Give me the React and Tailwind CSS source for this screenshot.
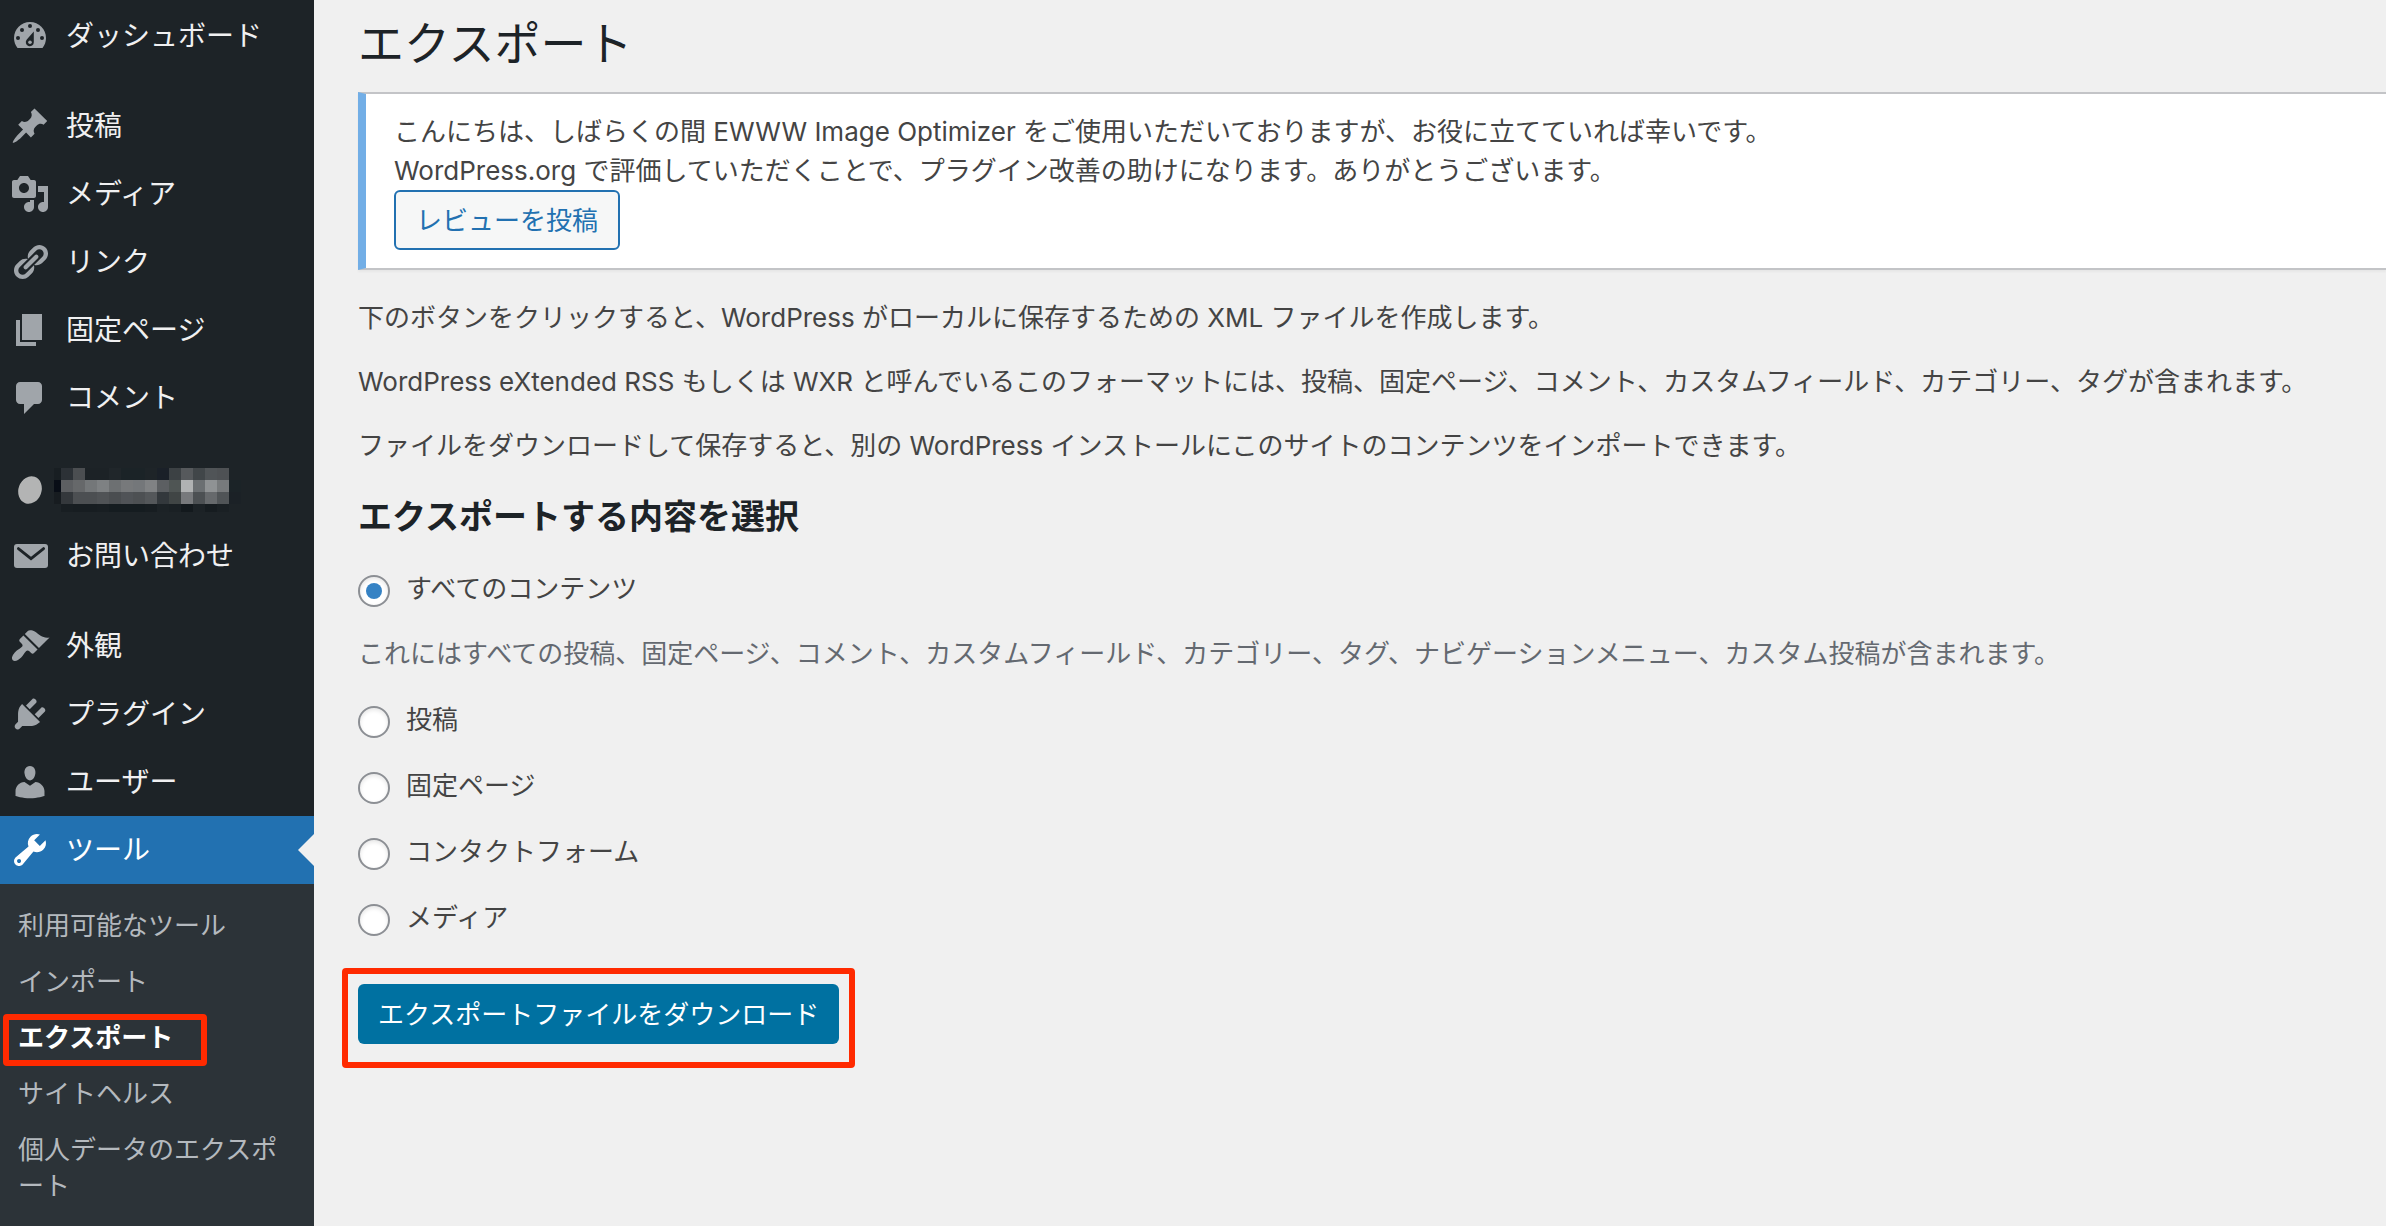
import React, { useState } from 'react';

const ICONS = {
  post: 'M10.44 3.02l1.82-1.82 6.36 6.35-1.83 1.82c-1.05-.68-2.48-.57-3.41.36l-.75.75c-.92.93-1.04 2.35-.35 3.41l-1.83 1.82-2.41-2.41-2.8 2.79c-.42.42-3.38 2.71-3.8 2.29s1.86-3.39 2.28-3.81l2.79-2.79L4.1 9.36l1.83-1.82c1.05.69 2.48.57 3.4-.36l.75-.75c.93-.92 1.05-2.35.36-3.41z',
  media: 'M13 11V4c0-.55-.45-1-1-1h-1.67L9 1H5L3.67 3H2c-.55 0-1 .45-1 1v7c0 .55.45 1 1 1h10c.55 0 1-.45 1-1zM7 4.5c1.38 0 2.5 1.12 2.5 2.5S8.38 9.5 7 9.5 4.5 8.38 4.5 7 5.62 4.5 7 4.5zM14 6h5v10.5c0 1.38-1.12 2.5-2.5 2.5S14 17.88 14 16.5s1.12-2.5 2.5-2.5c.17 0 .34.02.5.05V9h-3V6zm-4 8.05V13h2v3.5c0 1.38-1.12 2.5-2.5 2.5S7 17.88 7 16.5 8.12 14 9.5 14c.17 0 .34.02.5.05z',
  link: 'M17.74 2.76c1.68 1.69 1.68 4.41 0 6.1l-1.53 1.52c-1.12 1.12-2.7 1.47-4.14 1.09l2.62-2.61.76-.77.76-.76c.84-.84.84-2.2 0-3.04-.84-.85-2.2-.85-3.04 0l-.77.76-3.38 3.38c-.37-1.44-.02-3.02 1.1-4.14l1.52-1.53c1.69-1.68 4.42-1.68 6.1 0zM8.59 13.43l5.34-5.34c.42-.42.42-1.1 0-1.52-.44-.43-1.13-.39-1.53 0l-5.33 5.34c-.42.42-.42 1.1 0 1.52.44.43 1.13.39 1.52 0zm-.76 2.29l4.14-4.15c.38 1.44.03 3.02-1.09 4.14l-1.52 1.53c-1.69 1.68-4.41 1.68-6.1 0-1.68-1.68-1.68-4.42 0-6.1l1.53-1.52c1.12-1.12 2.7-1.47 4.14-1.1l-4.14 4.15c-.85.84-.85 2.2 0 3.05.84.84 2.2.84 3.04 0z',
  page: 'M6 15V2h10v13H6zm-1 1h8v2H3V5h2v11z',
  comment: 'M5 2h9c1.1 0 2 .9 2 2v7c0 1.1-.9 2-2 2h-2l-5 5v-5H5c-1.1 0-2-.9-2-2V4c0-1.1.9-2 2-2z',
  appearance: 'M14.48 11.06L7.41 3.99l1.5-1.5c.5-.56 2.3-.47 3.51.32 1.21.8 1.43 1.28 2.91 2.1 1.18.64 2.45 1.26 4.45.85zm-.71.71L6.7 4.7 4.93 6.47c-.39.39-.39 1.02 0 1.41l1.06 1.06c.39.39.39 1.03 0 1.42-.6.6-1.43 1.11-2.21 1.69-.35.26-.7.53-1.01.84C1.43 14.23.4 16.08 1.4 17.07c.99 1 2.84-.03 4.18-1.36.31-.31.58-.66.85-1.02.57-.78 1.08-1.61 1.69-2.21.39-.39 1.02-.39 1.41 0l1.06 1.06c.39.39 1.02.39 1.41 0z',
  plugin: 'M13.11 4.36L9.87 7.6 8 5.73l3.24-3.24c.35-.34 1.05-.2 1.56.32.52.51.66 1.21.31 1.55zm-8 1.77l.91-1.12 9.01 9.01-1.19.84c-.71.71-2.63 1.16-3.82 1.16H6.14L4.9 17.26c-.59.59-1.54.59-2.12 0-.59-.58-.59-1.53 0-2.12l1.24-1.24v-3.88c0-1.13.4-3.19 1.09-3.89zm7.26 3.97l3.24-3.24c.34-.35 1.04-.21 1.55.31.52.51.66 1.21.31 1.55l-3.24 3.25z',
  user: 'M10 9.25c-2.27 0-2.73-3.44-2.73-3.44C7 4.02 7.82 2 9.97 2c2.16 0 2.98 2.02 2.71 3.81 0 0-.41 3.44-2.68 3.44zm0 2.57L12.72 10c2.39 0 4.52 2.33 4.52 4.53v2.49s-3.65 1.13-7.24 1.13c-3.65 0-7.24-1.13-7.24-1.13v-2.49c0-2.25 1.94-4.48 4.47-4.48z',
  tool: 'M16.68 9.77c-1.34 1.34-3.3 1.67-4.95.99l-5.41 6.52c-.99.99-2.59.99-3.58 0s-.99-2.59 0-3.57l6.52-5.42c-.68-1.65-.35-3.61.99-4.95 1.28-1.28 3.12-1.62 4.72-1.06l-2.89 2.89 2.82 2.82 2.86-2.87c.53 1.58.18 3.39-1.08 4.65zM3.81 16.21c.4.39 1.04.39 1.43 0 .4-.4.4-1.04 0-1.43-.39-.4-1.03-.4-1.43 0-.39.39-.39 1.03 0 1.43z',
};

const MENU = [
  [{ icon: 'dashboard', label: 'ダッシュボード' }],
  [
    { icon: 'post', label: '投稿' },
    { icon: 'media', label: 'メディア' },
    { icon: 'link', label: 'リンク' },
    { icon: 'page', label: '固定ページ' },
    { icon: 'comment', label: 'コメント' },
  ],
  [
    { icon: 'hidden', label: '' },
    { icon: 'mail', label: 'お問い合わせ' },
  ],
  [
    { icon: 'appearance', label: '外観' },
    { icon: 'plugin', label: 'プラグイン' },
    { icon: 'user', label: 'ユーザー' },
    { icon: 'tool', label: 'ツール', current: true },
  ],
];

const SUBMENU = ['利用可能なツール', 'インポート', 'エクスポート', 'サイトヘルス', '個人データのエクスポート'];

const CONTENT_TYPES = [
  {
    id: 'all',
    label: 'すべてのコンテンツ',
    description:
      'これにはすべての投稿、固定ページ、コメント、カスタムフィールド、カテゴリー、タグ、ナビゲーションメニュー、カスタム投稿が含まれます。',
  },
  { id: 'posts', label: '投稿' },
  { id: 'pages', label: '固定ページ' },
  { id: 'forms', label: 'コンタクトフォーム' },
  { id: 'media', label: 'メディア' },
];

// Mosaic over the private menu label, one colour per 12px cell
const MOSAIC = [
  { y: 4, colors: ['#181e22', '#2c3136', '#4b4e51', '#1c2226', '#1c2226', '#20262a', '#1b2327', '#1b2327', '#1e2428', '#1a2028', '#3c4144', '#56595c', '#414649', '#505457', '#4e5154', '#1d2327'] },
  { y: 16, colors: ['#080d16', '#5d5f62', '#66686a', '#747779', '#7e8183', '#6d7072', '#77797b', '#74777a', '#808284', '#5c5f62', '#4f5554', '#b0b2b3', '#6b6f72', '#8f9294', '#777a7c', '#1b2327'] },
  { y: 28, colors: ['#171c20', '#34383c', '#4c4f52', '#4c4f52', '#505356', '#4a4d50', '#505357', '#4d5053', '#54575a', '#33383c', '#404545', '#77797c', '#4c5053', '#66696c', '#505457', '#1b2126'] },
  { y: 40, colors: ['#1d2327', '#181e22', '#171d21', '#171d21', '#181e22', '#151c20', '#151c20', '#151c20', '#171d21', '#1c2226', '#1a2024', '#13191d', '#1c2226', '#161c20', '#1a2024', '#1d2327'] },
];

const Icon = ({ name }) => {
  if (name === 'dashboard') {
    return (
      <svg viewBox="0 0 20 20" className="size-10" fill="currentColor" aria-hidden="true">
        <path d="M3.76 16h12.48c1.1-1.37 1.76-3.11 1.76-5 0-4.42-3.58-8-8-8s-8 3.58-8 8c0 1.89.66 3.63 1.76 5z" />
        <g className="fill-[#1d2327]">
          <circle cx="10" cy="5" r="1" />
          <circle cx="6" cy="7" r="1" />
          <circle cx="14" cy="7" r="1" />
          <circle cx="4" cy="11" r="1" />
          <circle cx="16" cy="11" r="1" />
          <path d="M11.9 7.8L8.4 11.8a2 2 0 1 0 3.5 1.3z" />
        </g>
        <circle cx="10" cy="13.1" r=".9" />
      </svg>
    );
  }
  if (name === 'hidden') {
    return (
      <svg viewBox="0 0 40 40" className="size-10" aria-hidden="true">
        <ellipse cx="20" cy="22" rx="11.5" ry="14" transform="rotate(20 20 22)" fill="#b3b4b4" />
      </svg>
    );
  }
  if (name === 'mail') {
    return (
      <svg viewBox="0 0 20 20" className="size-10" fill="currentColor" aria-hidden="true">
        <rect x="2" y="4" width="17" height="12" rx="1.5" />
        <path d="M4.2 6.3l6.3 5 6.3-5" fill="none" stroke="#1d2327" strokeWidth="1.4" strokeLinecap="round" />
      </svg>
    );
  }
  return (
    <svg viewBox="0 0 20 20" className="size-10" fill="currentColor" fillRule="evenodd" aria-hidden="true">
      <path d={ICONS[name]} />
    </svg>
  );
};

const Mosaic = () => (
  <svg viewBox="5 0 192 48" className="-ml-3 h-12 w-48" shapeRendering="crispEdges" aria-hidden="true">
    {MOSAIC.map((row) =>
      row.colors.map((color, x) => (
        <rect key={`${x}-${row.y}`} x={x * 12} y={row.y} width="12" height="12" fill={color} />
      ))
    )}
  </svg>
);

const MenuItem = ({ item }) => (
  <li>
    <a
      href="#"
      aria-current={item.current ? 'true' : undefined}
      className={`relative flex h-[68px] items-center gap-4 pl-2.5 text-[28px] leading-9 ${
        item.current ? 'bg-[#2271b1] text-white' : 'text-[#f0f0f1]'
      }`}
    >
      <span className={item.current ? 'text-white' : 'text-[#a0a5aa]'}>
        <Icon name={item.icon} />
      </span>
      {item.icon === 'hidden' ? <Mosaic /> : <span>{item.label}</span>}
      {item.current && (
        <span className="absolute right-0 border-y-[16px] border-r-[16px] border-y-transparent border-r-[#f0f0f0]" />
      )}
    </a>
  </li>
);

const Sidebar = () => (
  <nav className="w-[314px] shrink-0 bg-[#1d2327] pt-0.5">
    <div className="flex flex-col gap-[22px]">
      {MENU.map((group, index) => (
        <ul key={index}>
          {group.map((item) => (
            <MenuItem key={item.icon} item={item} />
          ))}
        </ul>
      ))}
    </div>
    <ul className="min-h-[342px] bg-[#2c3338] pt-3.5">
      {SUBMENU.map((label) => {
        const current = label === 'エクスポート';
        return (
          <li key={label} className="relative">
            <a
              href="#"
              className={`block py-2.5 pr-6 pl-[18px] text-[26px] leading-9 break-all ${
                current ? 'font-bold text-white' : 'text-[#b4b9be]'
              }`}
            >
              {label}
            </a>
            {current && (
              <span className="pointer-events-none absolute top-1 left-[3px] h-[52px] w-[204px] rounded-[4px] border-[6px] border-[#ff2a00]" />
            )}
          </li>
        );
      })}
    </ul>
  </nav>
);

const Notice = () => (
  <div className="border-y-2 border-l-8 border-y-[#c3c4c7] border-l-[#72aee6] bg-white py-[18px] pl-7 shadow-[0_2px_2px_rgba(0,0,0,0.04)]">
    <p>
      こんにちは、しばらくの間 EWWW Image Optimizer をご使用いただいておりますが、お役に立てていれば幸いです。
      <br />
      WordPress.org で評価していただくことで、プラグイン改善の助けになります。ありがとうございます。
    </p>
    <button className="block h-[60px] rounded-md border-2 border-[#2271b1] bg-[#f6f7f7] px-5 text-[#2271b1]">
      レビューを投稿
    </button>
  </div>
);

const ExportForm = () => {
  const [content, setContent] = useState('all');

  return (
    <form onSubmit={(e) => e.preventDefault()}>
      <fieldset aria-labelledby="export-heading">
        {CONTENT_TYPES.map((type) => (
          <div key={type.id} className="mb-[27px]">
            <label className="flex items-center gap-4">
              <input
                type="radio"
                name="content"
                value={type.id}
                checked={content === type.id}
                onChange={() => setContent(type.id)}
                className="flex size-8 shrink-0 appearance-none items-center justify-center rounded-full border-2 border-[#8c8f94] bg-white shadow-[inset_0_2px_4px_rgba(0,0,0,0.1)] before:size-4 before:rounded-full checked:before:bg-[#3582c4]"
              />
              <span className="pb-1 leading-[35px]">{type.label}</span>
            </label>
            {type.description && <p className="mt-6 mb-[29px] text-[#646970]">{type.description}</p>}
          </div>
        ))}
      </fieldset>
      <div className="relative mt-[18px] w-fit">
        <button type="submit" className="block h-[60px] rounded-md bg-[#0071a1] px-5 text-white">
          エクスポートファイルをダウンロード
        </button>
        <span className="pointer-events-none absolute -top-4 -right-4 -bottom-6 -left-4 rounded-[4px] border-[6px] border-[#ff2a00]" />
      </div>
    </form>
  );
};

const App = () => (
  <div
    lang="ja"
    className="flex min-h-screen bg-[#f0f0f0] font-['Inter','Noto_Sans_CJK_JP',sans-serif] text-[26px] leading-[39px] text-[#444]"
  >
    <Sidebar />
    <main className="min-w-0 flex-1 pt-3.5 pl-11">
      <h1 className="mb-5 text-[46px] leading-[58px] text-[#1d2327]">エクスポート</h1>
      <Notice />
      <div className="mt-7 space-y-[25px]">
        <p>下のボタンをクリックすると、WordPress がローカルに保存するための XML ファイルを作成します。</p>
        <p>
          WordPress eXtended RSS もしくは WXR と呼んでいるこのフォーマットには、投稿、固定ページ、コメント、カスタムフィールド、カテゴリー、タグが含まれます。
        </p>
        <p>ファイルをダウンロードして保存すると、別の WordPress インストールにこのサイトのコンテンツをインポートできます。</p>
      </div>
      <h2 id="export-heading" className="mt-7 mb-[30px] text-[34px] leading-[48px] font-semibold text-[#1d2327]">
        エクスポートする内容を選択
      </h2>
      <ExportForm />
    </main>
  </div>
);

export default App;
